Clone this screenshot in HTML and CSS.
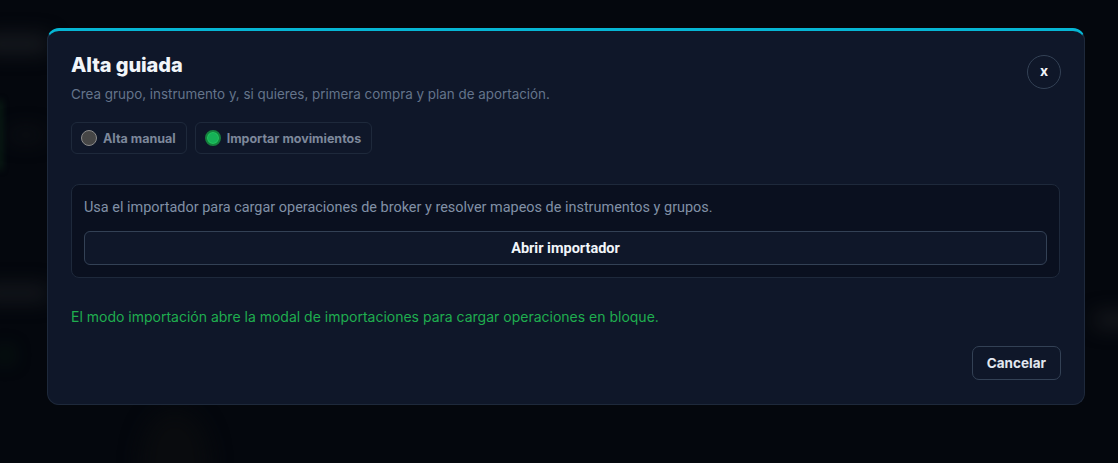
FILE: index.html
```html
<!DOCTYPE html>
<html lang="es">
<head>
<meta charset="UTF-8">
<meta name="viewport" content="width=device-width, initial-scale=1.0">
<title>Alta guiada</title>
<link rel="stylesheet" href="styles.css">
</head>
<body>

  <div class="backdrop">
    <div class="blur blur-top"></div>
    <div class="blur blur-mid"></div>
    <div class="blur blur-line"></div>
    <div class="blur blur-row"></div>
    <div class="blur blur-dot"></div>
    <div class="blur blur-right"></div>
    <div class="blur blur-bottom"></div>
  </div>

  <div class="overlay">
    <div class="modal">
      <div class="modal__head">
        <div>
          <h2 class="modal__title">Alta guiada</h2>
          <p class="modal__sub">Crea grupo, instrumento y, si quieres, primera compra y plan de aportación.</p>
        </div>
        <button class="close-btn">x</button>
      </div>

      <div class="modes">
        <label class="mode">
          <span class="radio"></span>
          Alta manual
        </label>
        <label class="mode">
          <span class="radio radio--on"></span>
          Importar movimientos
        </label>
      </div>

      <div class="import-box">
        <p class="import-box__text">Usa el importador para cargar operaciones de broker y resolver mapeos de instrumentos y grupos.</p>
        <button class="import-box__btn">Abrir importador</button>
      </div>

      <p class="note">El modo importación abre la modal de importaciones para cargar operaciones en bloque.</p>

      <div class="modal__foot">
        <button class="cancel-btn">Cancelar</button>
      </div>
    </div>
  </div>

</body>
</html>
```

FILE: styles.css
```css
body {
  margin: 0;
  padding: 0;
  background-color: #04070d;
  font-family: Inter, "Noto Sans", sans-serif;
  height: 463px;
  overflow: hidden;
}

/* fondo difuminado detras de la modal */
.backdrop {
  position: absolute;
  inset: 0;
  overflow: hidden;
}
.blur {
  position: absolute;
  filter: blur(10px);
  border-radius: 8px;
}
.blur-top {
  left: -20px;
  top: 36px;
  width: 70px;
  height: 16px;
  background-color: #1a1d22;
}
.blur-mid {
  left: 8px;
  top: 130px;
  width: 36px;
  height: 10px;
  background-color: #101317;
}
.blur-line {
  left: -2px;
  top: 100px;
  width: 4px;
  height: 70px;
  filter: blur(3px);
  background-color: #0a2416;
}
.blur-row {
  left: -20px;
  top: 286px;
  width: 70px;
  height: 14px;
  background-color: #181b20;
}
.blur-dot {
  left: 0;
  top: 350px;
  width: 10px;
  height: 10px;
  border-radius: 50%;
  background-color: #0c3516;
}
.blur-right {
  left: 1094px;
  top: 314px;
  width: 40px;
  height: 12px;
  background-color: #1c1e22;
}
.blur-bottom {
  left: 140px;
  top: 410px;
  width: 70px;
  height: 100px;
  border-radius: 50% 50% 0 0;
  background-color: #090b0e;
}

.overlay {
  position: relative;
  padding: 28px 0 0 47px;
}

.modal {
  width: 1038px;
  box-sizing: border-box;
  background-color: #0f1729;
  border: 1px solid #1e293b;
  border-top: 3px solid #06b6d4;
  border-radius: 12px;
  padding: 20px 24px 24px 23px;
  color: #e2e8f0;
}

.modal__head {
  display: flex;
  justify-content: space-between;
  align-items: flex-start;
}
.modal__title {
  margin: 0;
  font-size: 20px;
  line-height: 28px;
  font-weight: 800;
  color: #f1f5f9;
  letter-spacing: -0.1px;
}
.modal__sub {
  margin: 6px 0 0;
  font-size: 13.4px;
  line-height: 18px;
  color: #64748b;
}
.close-btn {
  margin-top: 4px;
  margin-right: -1px;
  width: 34px;
  height: 34px;
  border-radius: 50%;
  border: 1px solid #334155;
  background: transparent;
  color: #f1f5f9;
  font-family: Inter, sans-serif;
  font-size: 14px;
  font-weight: 700;
  line-height: 1;
  padding: 0 0 2px;
  cursor: pointer;
}

.modes {
  display: flex;
  gap: 8px;
  margin-top: 19px;
}
.mode {
  display: flex;
  align-items: center;
  gap: 6px;
  height: 32px;
  box-sizing: border-box;
  padding: 0 10px 0 9px;
  border: 1px solid #1e293b;
  border-radius: 6px;
  font-size: 12.5px;
  font-weight: 700;
  color: #7d889b;
}
.radio {
  width: 16px;
  height: 16px;
  box-sizing: border-box;
  border-radius: 50%;
  background-color: #464646;
  border: 1px solid #8b8b8b;
}
.radio--on {
  background-color: #16b157;
  border: 2px solid #15803d;
  box-shadow: 0 0 0 1px #22c55e inset;
}

.import-box {
  margin-top: 30px;
  background-color: #0a101f;
  border: 1px solid #1e293b;
  border-radius: 8px;
  padding: 13px 12px 12px 12px;
}
.import-box__text {
  margin: 0;
  font-family: Roboto, sans-serif;
  font-size: 14.45px;
  line-height: 20px;
  color: #8190a6;
}
.import-box__btn {
  display: block;
  width: 100%;
  margin-top: 13px;
  height: 34px;
  border: 1px solid #334155;
  border-radius: 6px;
  background-color: #0f1729;
  color: #f1f5f9;
  font-family: Roboto, sans-serif;
  font-size: 14.5px;
  font-weight: 700;
  cursor: pointer;
}

.note {
  margin: 29px 0 0;
  font-size: 14px;
  line-height: 20px;
  color: #1fae4f;
}

.modal__foot {
  display: flex;
  justify-content: flex-end;
  margin-top: 19px;
  margin-right: -1px;
}
.cancel-btn {
  height: 34px;
  padding: 0 14px;
  border: 1px solid #334155;
  border-radius: 7px;
  background: transparent;
  color: #e2e8f0;
  font-family: Inter, sans-serif;
  font-size: 13.5px;
  font-weight: 700;
  cursor: pointer;
}
```
